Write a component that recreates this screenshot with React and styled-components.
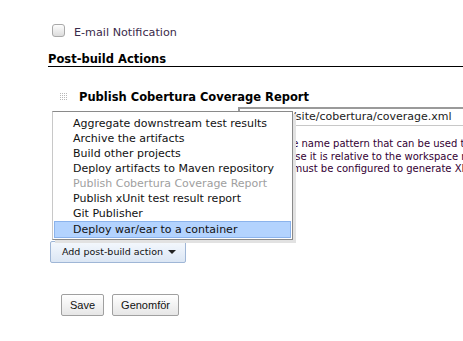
import styled, { createGlobalStyle } from 'styled-components';

const GlobalStyle = createGlobalStyle`
  html, body {
    margin: 0;
    padding: 0;
    background: #fff;
  }
`;

const menuItems = [
  { label: 'Aggregate downstream test results' },
  { label: 'Archive the artifacts' },
  { label: 'Build other projects' },
  { label: 'Deploy artifacts to Maven repository' },
  { label: 'Publish Cobertura Coverage Report', disabled: true },
  { label: 'Publish xUnit test result report' },
  { label: 'Git Publisher' },
  { label: 'Deploy war/ear to a container', active: true },
];

const helpLines = [
  'This is a file name pattern that can be used to locate the report files',
  'in which case it is relative to the workspace root of the build job.',
  'Cobertura must be configured to generate XML reports for this plugin.',
];

function Grip() {
  const dots = [];
  for (let r = 0; r < 4; r++) {
    for (let c = 0; c < 4; c++) {
      dots.push(<rect key={`${r}-${c}`} x={c * 2} y={r * 2} width="1" height="1" fill="#b8b8b8" />);
    }
  }
  return (
    <svg width="8" height="8" viewBox="0 0 8 8">
      {dots}
    </svg>
  );
}

export default function App() {
  return (
    <Page>
      <GlobalStyle />
      <CheckRow>
        <Checkbox />
        <CheckLabel>E-mail Notification</CheckLabel>
      </CheckRow>
      <SectionHeader>Post-build Actions</SectionHeader>
      <Publisher>
        <PublisherTitle>
          <Grip />
          <span>Publish Cobertura Coverage Report</span>
        </PublisherTitle>
        <FieldRow>
          <FieldLabel>Cobertura xml report pattern</FieldLabel>
          <TextInput>**/target/site/cobertura/coverage.xml</TextInput>
        </FieldRow>
        <Help>
          {helpLines.map((line) => (
            <HelpLine key={line}>{line}</HelpLine>
          ))}
        </Help>
      </Publisher>
      <Dropdown>
        <Menu>
          {menuItems.map((item) => (
            <MenuItem key={item.label} $disabled={item.disabled} $active={item.active}>
              {item.label}
            </MenuItem>
          ))}
        </Menu>
        <AddButton>
          Add post-build action
          <Caret />
        </AddButton>
      </Dropdown>
      <Buttons>
        <Button>Save</Button>
        <Button>Genomför</Button>
      </Buttons>
    </Page>
  );
}

const Page = styled.div`
  box-sizing: border-box;
  height: 341px;
  overflow: hidden;
  padding: 22px 0 0 48px;
  font-family: 'DejaVu Sans', Verdana, sans-serif;
  font-size: 11px;
  color: #333;
`;
const CheckRow = styled.div`
  align-items: center;
  display: flex;
  gap: 9px;
  padding-left: 4px;
  height: 17px;
`;
const Checkbox = styled.span`
  box-sizing: border-box;
  width: 13px;
  height: 13px;
  border: 1px solid #a9a9a9;
  border-radius: 3px;
  background: linear-gradient(#fdfdfd, #dcdcdc);
`;
const CheckLabel = styled.span`
  color: #3a2a4a;
  font-size: 11.2px;
  padding-top: 3px;
`;
const SectionHeader = styled.div`
  margin-top: 13px;
  border-bottom: 1px solid #000;
  color: #000;
  font-size: 11.5px;
  font-weight: bold;
  line-height: 14px;
`;
const Publisher = styled.div`
  padding: 22px 0 0 12px;
`;
const PublisherTitle = styled.div`
  align-items: center;
  display: flex;
  gap: 11px;
  color: #000;
  font-size: 11.5px;
  font-weight: bold;
  height: 15px;
`;
const FieldRow = styled.div`
  align-items: center;
  display: flex;
  margin-top: 3px;
  padding-left: 12px;
`;
const FieldLabel = styled.div`
  width: 166px;
  flex-shrink: 0;
  color: #3a2a4a;
`;
const TextInput = styled.div`
  box-sizing: border-box;
  flex: none;
  width: 260px;
  height: 19px;
  border: 1px solid #c8c8c8;
  border-top: 2px solid #9a9a9a;
  border-left: 2px solid #9a9a9a;
  padding: 0 4px;
  color: #222;
  font-size: 11px;
  line-height: 16px;
  white-space: nowrap;
  overflow: hidden;
`;
const Help = styled.div`
  margin: 12px 0 0 175px;
  padding-left: 2px;
  border-left: 2px solid #e4e4e4;
  color: #330033;
  font-size: 10px;
  line-height: 12.5px;
`;
const HelpLine = styled.div`
  white-space: nowrap;
  overflow: hidden;
`;
const Dropdown = styled.div`
  position: relative;
  margin: 65px 0 0 2px;
`;
const Menu = styled.div`
  position: absolute;
  left: 2px;
  bottom: 100%;
  margin-bottom: 1px;
  box-sizing: border-box;
  width: 241px;
  padding: 4px 0 1px;
  background: #fff;
  border: 1px solid #8a8a8a;
  border-left-color: #c8c8c8;
  box-shadow: 3px 3px 0 #e2e2e2;
`;
const MenuItem = styled.div`
  box-sizing: border-box;
  height: 15px;
  line-height: 15px;
  padding-left: 19px;
  margin: 0 1px;
  color: ${({ $disabled }) => ($disabled ? '#a0a0a0' : '#111')};
  ${({ $active }) =>
    $active &&
    `
    height: 17px;
    line-height: 15px;
    background: #b3d3fe;
    border: 1px solid #8bb3ec;
    padding-left: 18px;
  `}
`;
const AddButton = styled.button`
  align-items: center;
  display: inline-flex;
  gap: 5px;
  height: 22px;
  padding: 0 9px 0 11px;
  border: 1px solid #9fb6d6;
  border-radius: 2px;
  background: linear-gradient(#f4f8fd, #dbe6f4);
  color: #111;
  font-family: 'DejaVu Sans', Verdana, sans-serif;
  font-size: 9.5px;
  cursor: pointer;
`;
const Caret = styled.span`
  width: 0;
  height: 0;
  border-left: 4px solid transparent;
  border-right: 4px solid transparent;
  border-top: 4px solid #222;
`;
const Buttons = styled.div`
  display: flex;
  gap: 8px;
  margin: 31px 0 0 13px;
`;
const Button = styled.button`
  height: 22px;
  padding: 0 8px;
  border: 1px solid #a0a0a0;
  border-radius: 2px;
  background: linear-gradient(#ffffff, #e6e6e6);
  color: #111;
  font-family: 'Liberation Sans', Arial, sans-serif;
  font-size: 11px;
  cursor: pointer;
`;
